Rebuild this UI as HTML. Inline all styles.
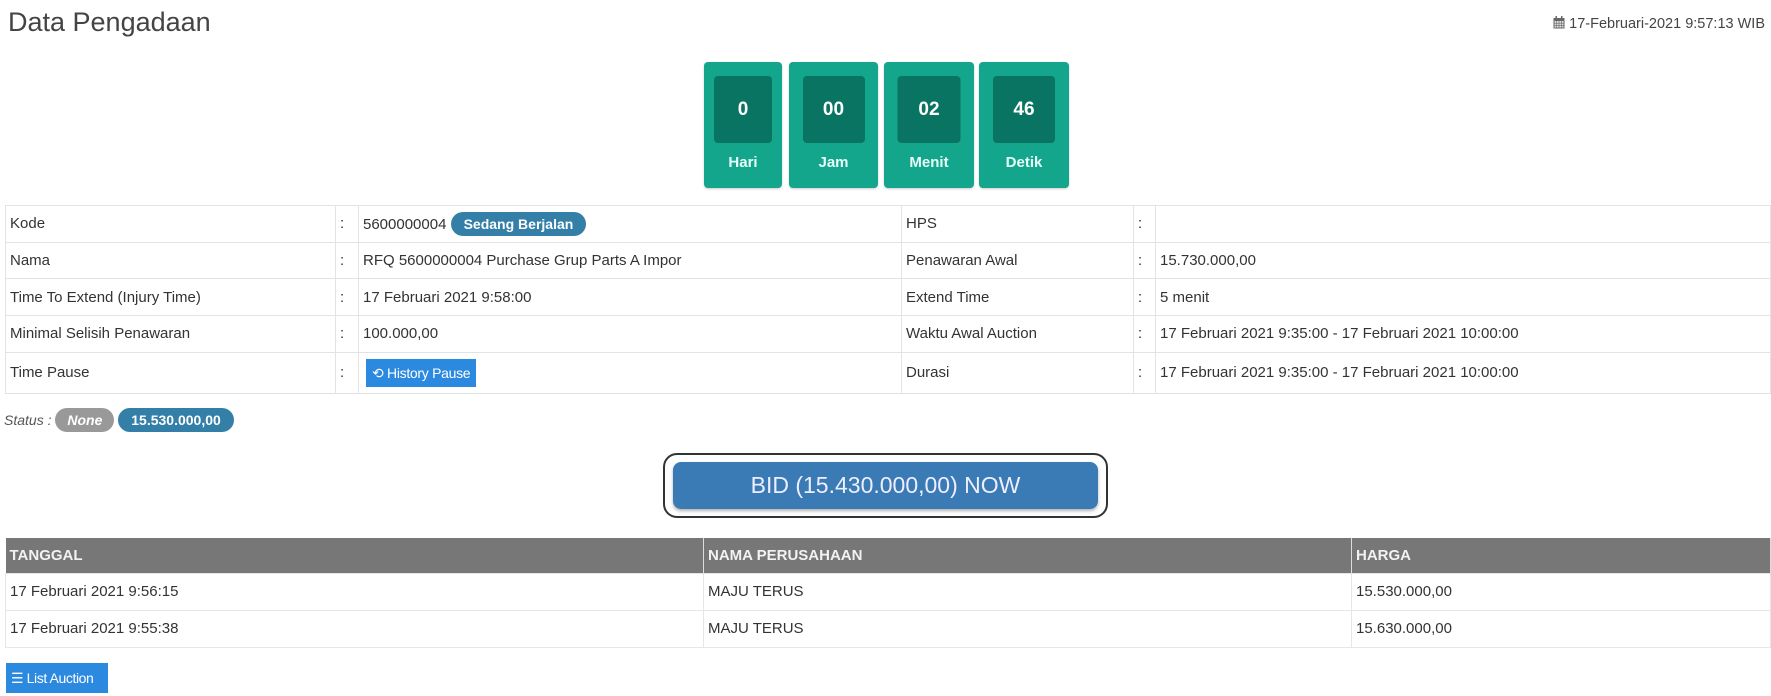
<!DOCTYPE html>
<html><head><meta charset="utf-8"><style>
*{box-sizing:border-box;margin:0;padding:0}
body{width:1771px;height:696px;background:#fff;font-family:"Liberation Sans",Arial,sans-serif;color:#333;position:relative;overflow:hidden;font-size:15px}
.a{position:absolute}
.title{left:8px;top:7px;font-size:27px;color:#444}
.date{right:6px;top:16px;font-size:14.5px;color:#444}
.cd{top:62px;height:126px;background:#14a68d;border-radius:4px;box-shadow:0 1px 2px rgba(0,0,0,.2)}
.cd .in{position:absolute;top:14px;left:50%;transform:translateX(-50%);width:58px;height:67px;background:#0a7463;border-radius:4px;color:#fff;font-weight:bold;font-size:19px;text-align:center;line-height:67px}
.cd .lb{position:absolute;top:92px;width:100%;text-align:center;color:#e6fff8;font-weight:bold;font-size:15px}
table{border-collapse:collapse;position:absolute}
.info{left:5px;top:205px;width:1766px}
.info td{border:1px solid #e3e3e3;height:36.7px;padding:0 4px;font-size:15px;color:#333;vertical-align:middle;white-space:nowrap}
.info tr:last-child td{height:41px}
.c{color:#999}
.badge{display:inline-block;border-radius:12px;color:#fff;font-weight:bold;padding:0 12px;height:24px;line-height:24px;font-size:14px}
.btnp{display:inline-block;background:#2b8ae0;color:#fff;height:28px;line-height:28px;padding:0 6px;font-size:14px;letter-spacing:-.3px}
.bid{left:663px;top:453px;width:445px;height:65px;border:2px solid #333;border-radius:14px}
.bid div{position:absolute;left:8px;top:7px;right:8px;bottom:7px;background:#3a7ab5;border-radius:8px;color:#eef;font-size:23px;text-align:center;line-height:47px;box-shadow:0 2px 3px rgba(0,0,0,.3)}
.bt{left:5px;top:538px;width:1766px}
.bt th{background:#777;color:#f2f2f2;text-align:left;font-size:15px;height:35px;padding:0 4px;border-right:1px solid #ddd}
.bt td{border:1px solid #e6e6e6;height:37px;padding:0 4px;font-size:15px}
</style></head><body>
<div class="a title">Data Pengadaan</div>
<div class="a date"><svg width="12" height="13" viewBox="0 0 12 13" style="vertical-align:-1px"><rect x="0.5" y="2" width="11" height="10.5" fill="#666"/><rect x="1.5" y="5" width="9" height="6.5" fill="#ddd"/><rect x="2.5" y="0" width="1.5" height="3" fill="#666"/><rect x="8" y="0" width="1.5" height="3" fill="#666"/><path d="M1.5 7.2H10.5M1.5 9.4H10.5M3.7 5V11.5M6 5V11.5M8.3 5V11.5" stroke="#666" stroke-width=".6"/></svg> 17-Februari-2021 9:57:13 WIB</div>

<div class="a cd" style="left:704px;width:78px"><div class="in">0</div><div class="lb">Hari</div></div>
<div class="a cd" style="left:789px;width:89px"><div class="in" style="width:62px">00</div><div class="lb">Jam</div></div>
<div class="a cd" style="left:884px;width:90px"><div class="in" style="width:63px">02</div><div class="lb">Menit</div></div>
<div class="a cd" style="left:979px;width:90px"><div class="in" style="width:62px">46</div><div class="lb">Detik</div></div>

<table class="info">
<colgroup><col style="width:330px"><col style="width:23px"><col style="width:543px"><col style="width:232px"><col style="width:22px"><col></colgroup>
<tr><td>Kode</td><td class="c">:</td><td>5600000004 <span class="badge" style="background:#337fa8;padding:0 13px">Sedang Berjalan</span></td><td>HPS</td><td class="c">:</td><td></td></tr>
<tr><td>Nama</td><td class="c">:</td><td>RFQ 5600000004 Purchase Grup Parts A Impor</td><td>Penawaran Awal</td><td class="c">:</td><td>15.730.000,00</td></tr>
<tr><td>Time To Extend (Injury Time)</td><td class="c">:</td><td>17 Februari 2021 9:58:00</td><td>Extend Time</td><td class="c">:</td><td>5 menit</td></tr>
<tr><td>Minimal Selisih Penawaran</td><td class="c">:</td><td>100.000,00</td><td>Waktu Awal Auction</td><td class="c">:</td><td>17 Februari 2021 9:35:00 - 17 Februari 2021 10:00:00</td></tr>
<tr><td>Time Pause</td><td class="c">:</td><td><span class="btnp" style="margin-left:3px">&#x27F2; History Pause</span></td><td>Durasi</td><td class="c">:</td><td>17 Februari 2021 9:35:00 - 17 Februari 2021 10:00:00</td></tr>
</table>

<div class="a" style="left:4px;top:408px;font-size:14px;font-style:italic;color:#555;line-height:24px">Status : <span class="badge" style="background:#999;font-style:italic;padding:0 12px">None</span> <span class="badge" style="background:#337fa8;font-style:normal;padding:0 13px">15.530.000,00</span></div>

<div class="a bid"><div>BID (15.430.000,00) NOW</div></div>

<table class="bt">
<colgroup><col style="width:698px"><col style="width:648px"><col></colgroup>
<tr><th>TANGGAL</th><th>NAMA PERUSAHAAN</th><th>HARGA</th></tr>
<tr><td>17 Februari 2021 9:56:15</td><td>MAJU TERUS</td><td>15.530.000,00</td></tr>
<tr><td>17 Februari 2021 9:55:38</td><td>MAJU TERUS</td><td>15.630.000,00</td></tr>
</table>

<div class="a" style="left:6px;top:663px;width:102px;height:30px;background:#2b8ae0;color:#fff;font-size:14px;line-height:30px;padding-left:5px;letter-spacing:-.4px">&#9776; List Auction</div>
</body></html>
